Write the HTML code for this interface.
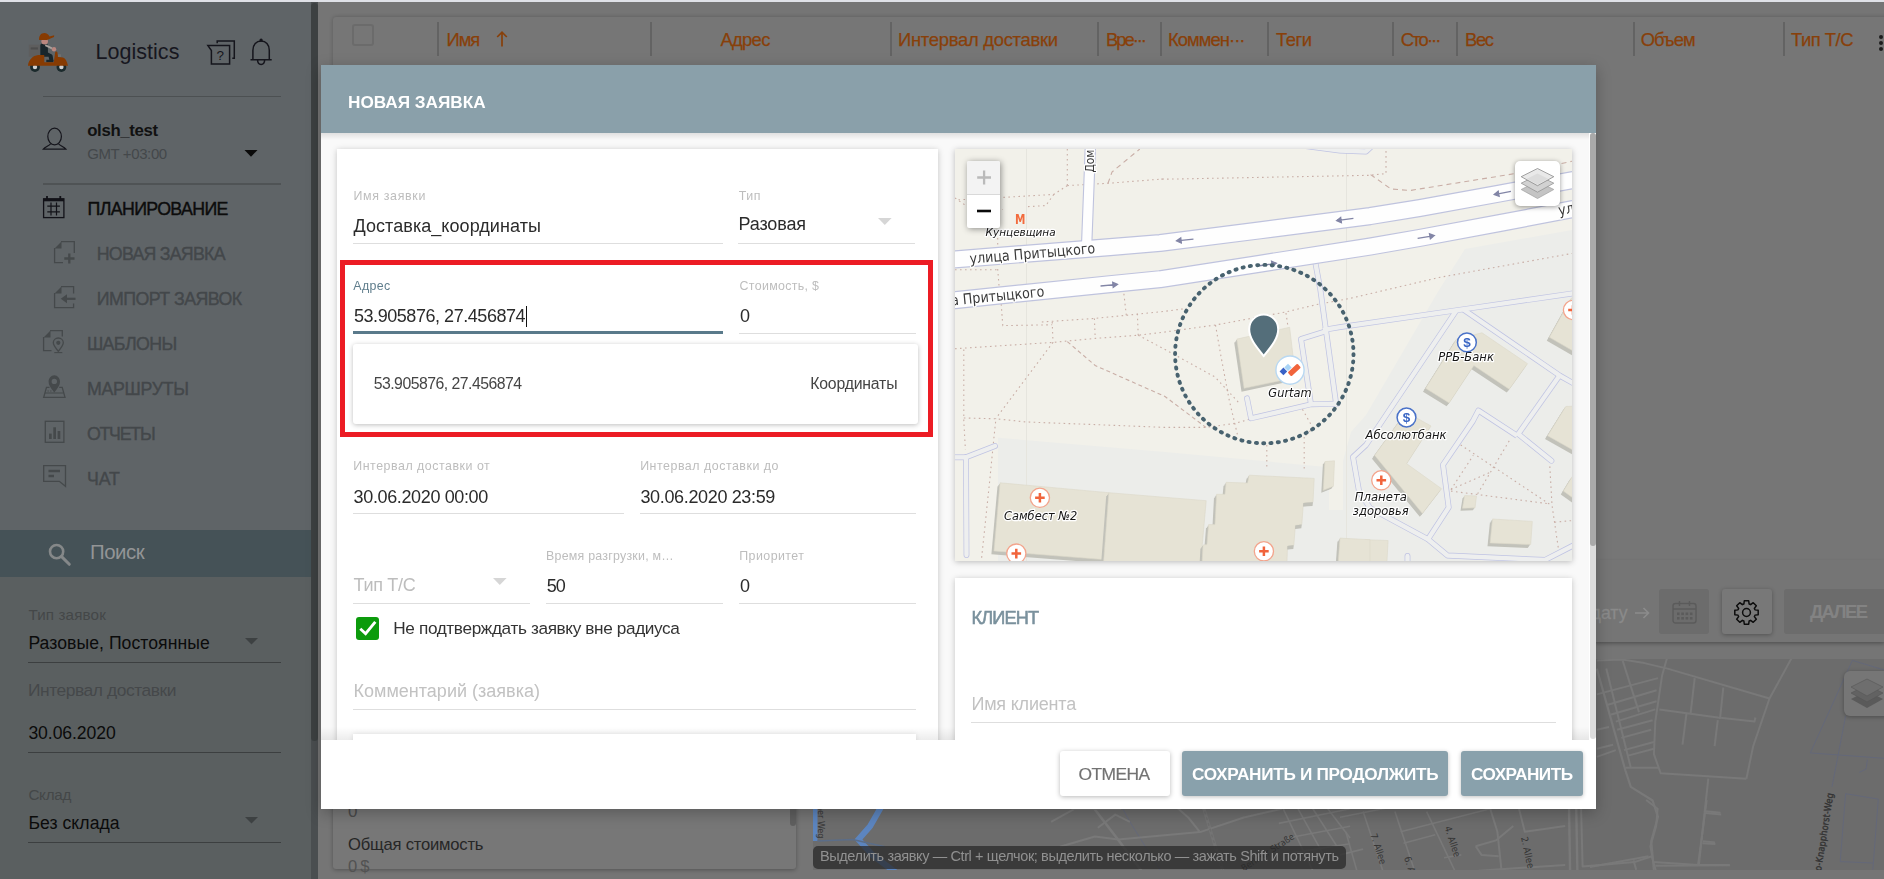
<!DOCTYPE html>
<html lang="ru"><head><meta charset="utf-8"><title>Logistics — Новая заявка</title>
<style>
html,body{margin:0;padding:0}
body{width:1884px;height:879px;overflow:hidden;position:relative;background:#757575;font-family:"Liberation Sans",sans-serif}
.t{position:absolute;white-space:nowrap;line-height:1}
.a{position:absolute}
svg{position:absolute;overflow:visible}
</style></head><body>
<div class="a" style="left:0;top:0;width:1884px;height:2px;background:#dfe1e7"></div>
<div class="a" style="left:333px;top:17px;width:1560px;height:625px;background:#767676;border-radius:3px;box-shadow:0 0 4px rgba(0,0,0,.22)"></div>
<div class="a" style="left:352px;top:24px;width:18px;height:18px;border:2px solid #6b6b6b;border-radius:3px"></div>
<div class="a" style="left:437.0px;top:22px;width:2px;height:34px;background:#636363"></div><div class="a" style="left:650.0px;top:22px;width:2px;height:34px;background:#636363"></div><div class="a" style="left:889.5px;top:22px;width:2px;height:34px;background:#636363"></div><div class="a" style="left:1097.0px;top:22px;width:2px;height:34px;background:#636363"></div><div class="a" style="left:1160.0px;top:22px;width:2px;height:34px;background:#636363"></div><div class="a" style="left:1267.0px;top:22px;width:2px;height:34px;background:#636363"></div><div class="a" style="left:1392.0px;top:22px;width:2px;height:34px;background:#636363"></div><div class="a" style="left:1456.0px;top:22px;width:2px;height:34px;background:#636363"></div><div class="a" style="left:1632.5px;top:22px;width:2px;height:34px;background:#636363"></div><div class="a" style="left:1782.5px;top:22px;width:2px;height:34px;background:#636363"></div>
<span class="t" style="top:31.00px;font-size:18.40px;color:#88400a;letter-spacing:-1.164px;left:446.60px;-webkit-text-stroke:.25px #88400a;">Имя</span><svg style="left:496px;top:30px" width="12" height="18" viewBox="0 0 12 18"><path d="M6 16.5V2.2M1.2 7L6 2.2L10.8 7" fill="none" stroke="#88400a" stroke-width="1.7"/></svg><span class="t" style="top:31.00px;font-size:18.40px;color:#88400a;letter-spacing:-0.664px;left:720.40px;-webkit-text-stroke:.25px #88400a;">Адрес</span><span class="t" style="top:31.00px;font-size:18.40px;color:#88400a;letter-spacing:-0.273px;left:898.00px;-webkit-text-stroke:.25px #88400a;">Интервал доставки</span><span class="t" style="top:31.00px;font-size:18.40px;color:#88400a;letter-spacing:-2.022px;left:1106.00px;-webkit-text-stroke:.25px #88400a;">Вре···</span><span class="t" style="top:31.00px;font-size:18.40px;color:#88400a;letter-spacing:-0.938px;left:1168.00px;-webkit-text-stroke:.25px #88400a;">Коммен···</span><span class="t" style="top:31.00px;font-size:18.40px;color:#88400a;letter-spacing:-0.474px;left:1276.00px;-webkit-text-stroke:.25px #88400a;">Теги</span><span class="t" style="top:31.00px;font-size:18.40px;color:#88400a;letter-spacing:-1.882px;left:1400.80px;-webkit-text-stroke:.25px #88400a;">Сто···</span><span class="t" style="top:31.00px;font-size:18.40px;color:#88400a;letter-spacing:-1.352px;left:1465.00px;-webkit-text-stroke:.25px #88400a;">Вес</span><span class="t" style="top:31.00px;font-size:18.40px;color:#88400a;letter-spacing:-0.898px;left:1640.70px;-webkit-text-stroke:.25px #88400a;">Объем</span><span class="t" style="top:31.00px;font-size:18.40px;color:#88400a;letter-spacing:-0.482px;left:1791.00px;-webkit-text-stroke:.25px #88400a;">Тип Т/С</span><div class="a" style="left:1879px;top:35px;width:4px;height:4px;border-radius:2px;background:#1d1d1d"></div><div class="a" style="left:1879px;top:41px;width:4px;height:4px;border-radius:2px;background:#1d1d1d"></div><div class="a" style="left:1879px;top:47px;width:4px;height:4px;border-radius:2px;background:#1d1d1d"></div>
<div class="a" style="left:1596px;top:560px;width:288px;height:82px;background:#757575;box-shadow:0 2px 4px rgba(0,0,0,.18)"></div>
<div class="a" style="left:813px;top:659px;width:1071px;height:211px;background:#6c6c6c;overflow:hidden"><svg style="left:0;top:0" width="1071" height="211" viewBox="813 659 1071 211"><path d="M813 809H817.500V841H813Z" fill="#5c85bf"/><polyline points="881.8,805.8 870.1,826.3 858.4,839.4 873.0,855.5 896.4,873.0" fill="none" stroke="#5c85bf" stroke-width="6"/><polyline points="817.5,840.9 852.6,839.4 884.7,846.7" fill="none" stroke="#5b6d88" stroke-width="1.500"/><polyline points="1596.8,660.4 1622.6,659.6 1644.4,663.1 1667.5,668.6 1769.5,698.5" fill="none" stroke="#797979" stroke-width="2" stroke-linejoin="round"/><polyline points="1667.5,656.3 1662.1,675.4 1655.3,721.6 1653.9,754.2 1660.7,773.3 1746.4,778.7" fill="none" stroke="#797979" stroke-width="2" stroke-linejoin="round"/><polyline points="1792.6,656.3 1769.5,698.5 1753.2,746.1 1746.4,778.7" fill="none" stroke="#797979" stroke-width="2" stroke-linejoin="round"/><polyline points="1659.4,709.4 1717.8,717.5 1754.5,721.6 1755.4,717.5" fill="none" stroke="#797979" stroke-width="2" stroke-linejoin="round"/><polyline points="1694.7,678.1 1690.6,713.4" fill="none" stroke="#797979" stroke-width="2" stroke-linejoin="round"/><polyline points="1686.5,713.4 1682.5,744.7" fill="none" stroke="#797979" stroke-width="2" stroke-linejoin="round"/><polyline points="1723.3,687.6 1720.0,718.9" fill="none" stroke="#797979" stroke-width="2" stroke-linejoin="round"/><polyline points="1717.8,720.2 1714.6,746.1" fill="none" stroke="#797979" stroke-width="2" stroke-linejoin="round"/><polyline points="1596.8,694.4 1658.0,678.1" fill="none" stroke="#797979" stroke-width="2" stroke-linejoin="round"/><polyline points="1606.3,705.3 1656.6,690.3" fill="none" stroke="#797979" stroke-width="2" stroke-linejoin="round"/><polyline points="1610.4,714.8 1656.6,701.2" fill="none" stroke="#797979" stroke-width="2" stroke-linejoin="round"/><polyline points="1615.8,721.6 1655.3,709.4" fill="none" stroke="#797979" stroke-width="2" stroke-linejoin="round"/><polyline points="1617.2,729.7 1652.6,720.2" fill="none" stroke="#797979" stroke-width="2" stroke-linejoin="round"/><polyline points="1621.3,737.9 1651.2,729.7" fill="none" stroke="#797979" stroke-width="2" stroke-linejoin="round"/><polyline points="1624.0,750.1 1653.9,742.0" fill="none" stroke="#797979" stroke-width="2" stroke-linejoin="round"/><polyline points="1628.1,755.6 1653.9,748.8" fill="none" stroke="#797979" stroke-width="2" stroke-linejoin="round"/><polyline points="1625.4,767.8 1658.0,767.8" fill="none" stroke="#797979" stroke-width="2" stroke-linejoin="round"/><polyline points="1596.8,729.7 1609.0,727.0" fill="none" stroke="#797979" stroke-width="2" stroke-linejoin="round"/><polyline points="1596.8,748.8 1613.1,744.7" fill="none" stroke="#797979" stroke-width="2" stroke-linejoin="round"/><polyline points="1596.8,756.9 1615.8,750.1" fill="none" stroke="#797979" stroke-width="2" stroke-linejoin="round"/><polyline points="1596.8,668.6 1625.4,770.5 1630.8,786.9 1652.6,800.5 1658.0,816.8 1651.2,841.3 1653.9,869.8" fill="none" stroke="#797979" stroke-width="2.2" stroke-linejoin="round"/><polyline points="1606.3,668.6 1630.8,767.8" fill="none" stroke="#797979" stroke-width="2" stroke-linejoin="round"/><polyline points="1622.6,660.4 1639.0,712.1" fill="none" stroke="#797979" stroke-width="2" stroke-linejoin="round"/><polyline points="1590.0,867.1 1648.5,856.2" fill="none" stroke="#797979" stroke-width="2" stroke-linejoin="round"/><polyline points="1633.5,860.3 1636.2,869.8" fill="none" stroke="#797979" stroke-width="2" stroke-linejoin="round"/><polyline points="1655.3,865.7 1730.1,865.2" fill="none" stroke="#797979" stroke-width="2" stroke-linejoin="round"/><polyline points="1708.3,778.7 1698.8,865.7" fill="none" stroke="#797979" stroke-width="2" stroke-linejoin="round"/><polyline points="1705.6,811.3 1720.5,812.7" fill="none" stroke="#797979" stroke-width="2" stroke-linejoin="round"/><polyline points="1702.9,841.3 1715.1,842.6" fill="none" stroke="#797979" stroke-width="2" stroke-linejoin="round"/><polyline points="1852.4,660.4 1810.3,752.9 1884.0,758.3" fill="none" stroke="#646879" stroke-width="1" stroke-linejoin="round"/><polyline points="1852.4,660.4 1884.0,669.9" fill="none" stroke="#646879" stroke-width="1" stroke-linejoin="round"/><polyline points="1845.6,716.1 1832.0,786.9" fill="none" stroke="#646879" stroke-width="1" stroke-linejoin="round"/><polyline points="1845.6,793.7 1878.3,799.1 1872.8,869.8" fill="none" stroke="#646879" stroke-width="1" stroke-linejoin="round"/><polyline points="1845.6,793.7 1840.2,861.6 1872.8,863.0" fill="none" stroke="#646879" stroke-width="1" stroke-linejoin="round"/><polyline points="1867.4,759.7 1866.0,769.2 1859.2,772.4" fill="none" stroke="#646879" stroke-width="1" stroke-linejoin="round"/><polyline points="1051.1,821.9 1074.5,808.8" fill="none" stroke="#797979" stroke-width="2" stroke-linejoin="round"/><polyline points="1092.0,805.8 1116.8,838.0 1143.1,873.0" fill="none" stroke="#797979" stroke-width="2.6" stroke-linejoin="round"/><polyline points="1121.2,805.8 1129.9,821.9 1162.0,873.0" fill="none" stroke="#646879" stroke-width="1" stroke-linejoin="round"/><polyline points="1059.9,846.7 1094.9,836.5 1118.2,839.4 1200.0,832.1 1188.3,817.5 1176.6,807.3" fill="none" stroke="#797979" stroke-width="2" stroke-linejoin="round"/><polyline points="1074.5,808.8 1121.2,808.8" fill="none" stroke="#797979" stroke-width="2" stroke-linejoin="round"/><polyline points="1097.8,827.7 1115.3,814.6 1129.9,821.9" fill="none" stroke="#797979" stroke-width="2" stroke-linejoin="round"/><polyline points="1202.9,805.8 1223.4,873.0" fill="none" stroke="#747474" stroke-width="3.2" stroke-linejoin="round"/><polyline points="1200.0,832.1 1243.8,817.5 1281.8,808.8" fill="none" stroke="#797979" stroke-width="2" stroke-linejoin="round"/><polyline points="1281.8,805.8 1313.9,873.0" fill="none" stroke="#797979" stroke-width="1.6" stroke-linejoin="round"/><polyline points="1296.4,805.8 1325.5,858.4" fill="none" stroke="#797979" stroke-width="1.6" stroke-linejoin="round"/><polyline points="1310.9,805.8 1337.2,846.7" fill="none" stroke="#797979" stroke-width="1.6" stroke-linejoin="round"/><polyline points="1325.5,805.8 1350.1,838.0" fill="none" stroke="#797979" stroke-width="1.6" stroke-linejoin="round"/><polyline points="1278.8,823.4 1350.1,808.8" fill="none" stroke="#797979" stroke-width="1.6" stroke-linejoin="round"/><polyline points="1287.6,838.0 1350.1,826.3" fill="none" stroke="#797979" stroke-width="1.6" stroke-linejoin="round"/><polyline points="1293.4,852.6 1350.1,843.8" fill="none" stroke="#797979" stroke-width="1.6" stroke-linejoin="round"/><polyline points="1340.0,817.3 1397.8,805.8" fill="none" stroke="#797979" stroke-width="1.6" stroke-linejoin="round"/><polyline points="1345.8,831.8 1357.3,872.2" fill="none" stroke="#797979" stroke-width="1.6" stroke-linejoin="round"/><polyline points="1363.1,811.6 1383.3,872.2" fill="none" stroke="#797979" stroke-width="1.6" stroke-linejoin="round"/><polyline points="1394.9,811.6 1415.1,872.2" fill="none" stroke="#797979" stroke-width="1.6" stroke-linejoin="round"/><polyline points="1426.6,811.6 1455.5,872.2" fill="none" stroke="#797979" stroke-width="1.6" stroke-linejoin="round"/><polyline points="1400.6,831.8 1490.2,808.7" fill="none" stroke="#797979" stroke-width="1.6" stroke-linejoin="round"/><polyline points="1403.5,843.3 1435.3,834.7" fill="none" stroke="#797979" stroke-width="1.6" stroke-linejoin="round"/><polyline points="1340.0,854.9 1363.1,849.1" fill="none" stroke="#797979" stroke-width="1.6" stroke-linejoin="round"/><polyline points="1444.0,857.8 1461.3,854.9" fill="none" stroke="#797979" stroke-width="1.6" stroke-linejoin="round"/><polyline points="1490.2,808.7 1497.4,831.8 1501.7,872.2" fill="none" stroke="#797979" stroke-width="2" stroke-linejoin="round"/><polyline points="1519.0,808.7 1524.8,831.8 1565.2,826.0" fill="none" stroke="#797979" stroke-width="2" stroke-linejoin="round"/><polyline points="1475.7,846.2 1495.9,840.4 1513.3,826.0" fill="none" stroke="#797979" stroke-width="2" stroke-linejoin="round"/><polyline points="1475.7,846.2 1481.5,854.9 1498.8,856.3" fill="none" stroke="#797979" stroke-width="2" stroke-linejoin="round"/><polyline points="1478.6,870.7 1565.2,865.0" fill="none" stroke="#797979" stroke-width="2" stroke-linejoin="round"/><polyline points="1569.0,805.8 1570.1,872.2" fill="none" stroke="#797979" stroke-width="2.4" stroke-linejoin="round"/><polyline points="1576.2,805.8 1577.4,872.2" fill="none" stroke="#797979" stroke-width="2.4" stroke-linejoin="round"/><polyline points="1581.1,808.7 1582.6,866.4 1634.5,862.1 1651.9,856.3 1656.2,872.2" fill="none" stroke="#797979" stroke-width="2" stroke-linejoin="round"/><polyline points="1646.1,800.0 1657.6,808.7 1656.2,826.0 1650.4,846.2 1653.3,862.1 1698.1,865.0 1729.8,865.0" fill="none" stroke="#797979" stroke-width="2" stroke-linejoin="round"/><polyline points="1706.7,800.0 1698.1,865.0" fill="none" stroke="#797979" stroke-width="2" stroke-linejoin="round"/><polyline points="1705.3,813.0 1721.2,814.4" fill="none" stroke="#797979" stroke-width="2" stroke-linejoin="round"/><polyline points="1702.4,843.3 1715.4,843.9" fill="none" stroke="#797979" stroke-width="2" stroke-linejoin="round"/><polyline points="1202.9,805.8 1223.4,873.0" fill="none" stroke="#6c6c6c" stroke-width="1.400" stroke-dasharray="3 3"/><text x="1820.9" y="873.8" font-family="'DejaVu Sans Condensed', sans-serif" font-size="9.5" fill="#353535" transform="rotate(-81 1820.9 873.8)">lo-Knapphorst-Weg</text><text x="1820.4" y="873.7" font-family="'DejaVu Sans Condensed', sans-serif" font-size="9.5" fill="#353535" transform="rotate(-81 1820.4 873.7)">lo-Knapphorst-Weg</text><text x="1370.3" y="834.7" font-family="'DejaVu Sans Condensed', sans-serif" font-size="9.5" fill="#353535" transform="rotate(72 1370.3 834.7)">7. Allee</text><text x="1404.1" y="857.8" font-family="'DejaVu Sans Condensed', sans-serif" font-size="9.5" fill="#353535" transform="rotate(72 1404.1 857.8)">6. Allee</text><text x="1444.5" y="827.4" font-family="'DejaVu Sans Condensed', sans-serif" font-size="9.5" fill="#353535" transform="rotate(72 1444.5 827.4)">4. Allee</text><text x="1521.1" y="837.5" font-family="'DejaVu Sans Condensed', sans-serif" font-size="9.5" fill="#353535" transform="rotate(78 1521.1 837.5)">2. Allee</text><text x="817.500" y="838.500" font-family="'DejaVu Sans Condensed', sans-serif" font-size="9" fill="#353535" text-anchor="end" transform="rotate(90 817.500 838.500)">Berliner Weg</text><text x="1243.8" y="871.5" font-family="'DejaVu Sans Condensed', sans-serif" font-size="9" fill="#353535" transform="rotate(-33 1243.8 871.5)">Berliner Straße</text></svg></div><span class="t" style="top:605.00px;font-size:17.80px;color:#8a8a8a;right:256.40px;-webkit-text-stroke:.3px #8a8a8a;">дату</span><svg style="left:1634px;top:606px" width="16" height="14" viewBox="0 0 16 14"><path d="M1 7H14.5M9.5 2L14.5 7L9.5 12" fill="none" stroke="#8c8c8c" stroke-width="1.6"/></svg><div class="a" style="left:1659px;top:589px;width:50px;height:45px;background:#6c6c6c;border-radius:3px"></div><svg style="left:1672px;top:600px" width="25" height="24" viewBox="0 0 25 24"><g fill="none" stroke="#5b5b5b" stroke-width="1.4"><rect x="1" y="3.5" width="23" height="19.5" rx="2.5"/><path d="M1 9H24M7.5 1V6M17.5 1V6"/></g><g fill="#5b5b5b"><rect x="5" y="12.5" width="2.6" height="2.6"/><rect x="9.3" y="12.5" width="2.6" height="2.6"/><rect x="13.6" y="12.5" width="2.6" height="2.6"/><rect x="17.9" y="12.5" width="2.6" height="2.6"/><rect x="5" y="17" width="2.6" height="2.6"/><rect x="9.3" y="17" width="2.6" height="2.6"/><rect x="13.6" y="17" width="2.6" height="2.6"/><rect x="17.9" y="17" width="2.6" height="2.6"/></g></svg><div class="a" style="left:1722px;top:589px;width:50px;height:45px;background:#787878;border-radius:3px;box-shadow:0 1px 4px rgba(0,0,0,.3)"></div><svg style="left:1733px;top:599.300px" width="27" height="27" viewBox="0 0 27 27"><g fill="none" stroke="#0d0d0d" stroke-width="1.500" stroke-linejoin="round"><path d="M10.87 5.00L11.31 1.80L15.69 1.80L16.13 5.00A8.90 8.90 0 0 1 17.65 5.63L17.65 5.63L20.22 3.68L23.32 6.78L21.37 9.35A8.90 8.90 0 0 1 22.00 10.87L22.00 10.87L25.20 11.31L25.20 15.69L22.00 16.13A8.90 8.90 0 0 1 21.37 17.65L21.37 17.65L23.32 20.22L20.22 23.32L17.65 21.37A8.90 8.90 0 0 1 16.13 22.00L16.13 22.00L15.69 25.20L11.31 25.20L10.87 22.00A8.90 8.90 0 0 1 9.35 21.37L9.35 21.37L6.78 23.32L3.68 20.22L5.63 17.65A8.90 8.90 0 0 1 5.00 16.13L5.00 16.13L1.80 15.69L1.80 11.31L5.00 10.87A8.90 8.90 0 0 1 5.63 9.35L5.63 9.35L3.68 6.78L6.78 3.68L9.35 5.63A8.90 8.90 0 0 1 10.87 5.00Z"/><circle cx="13.500" cy="13.500" r="3.900"/></g></svg><div class="a" style="left:1784px;top:589px;width:110px;height:45px;background:#6c6c6c;border-radius:3px"></div><span class="t" style="top:603.00px;font-size:18.50px;color:#838383;font-weight:700;letter-spacing:-1.609px;left:1810.00px;">ДАЛЕЕ</span><div class="a" style="left:1844px;top:671px;width:50px;height:45px;background:#767676;border-radius:6px;box-shadow:0 1px 4px rgba(0,0,0,.3)"></div><svg style="left:1849px;top:677px" width="36" height="34" viewBox="0 0 36 34"><path d="M18 14L34 22L18 31L2 22Z" fill="#5a5a5a"/><path d="M18 8L34 16L18 25L2 16Z" fill="#626262" stroke="#555" stroke-width=".6"/><path d="M18 2L34 10L18 19L2 10Z" fill="#6e6e6e" stroke="#585858" stroke-width=".6"/></svg>
<div class="a" style="left:333px;top:800px;width:463px;height:69px;background:#777;border-radius:0 0 3px 3px;box-shadow:0 1px 4px rgba(0,0,0,.3)"></div><div class="a" style="left:790px;top:800px;width:6px;height:26px;background:#5f5f5f;border-radius:3px"></div><span class="t" style="top:803.00px;font-size:17.00px;color:#4a4a4a;left:348.00px;">0</span><span class="t" style="top:837.00px;font-size:16.60px;color:#262626;letter-spacing:-0.199px;left:348.00px;">Общая стоимость</span><span class="t" style="top:859.00px;font-size:16.60px;color:#525252;letter-spacing:-0.789px;left:348.00px;">0 $</span><div class="a" style="left:813px;top:846px;width:533px;height:23px;background:rgba(40,40,40,.74);border-radius:5px"></div><span class="t" style="top:849.00px;font-size:14.50px;color:#909090;letter-spacing:-0.393px;left:820.00px;z-index:1;">Выделить заявку — Ctrl + щелчок; выделить несколько — зажать Shift и потянуть</span>
<div class="a" style="left:0;top:2px;width:311px;height:528px;background:#5f6467"></div><div class="a" style="left:0;top:577px;width:311px;height:302px;background:#5a5f60"></div><div class="a" style="left:0;top:530px;width:311px;height:47px;background:#455257"></div><div class="a" style="left:311px;top:2px;width:7px;height:877px;background:#4a4e50"></div><div class="a" style="left:311px;top:3px;width:7px;height:738px;background:#3d4142;border-radius:3.5px"></div>
<svg style="left:27px;top:32px" width="42" height="40" viewBox="0 0 42 40">
<circle cx="8" cy="35" r="4.900" fill="#1b2a2c"/><circle cx="8" cy="35" r="2.200" fill="#cfcfcf"/>
<circle cx="34.400" cy="35" r="4.900" fill="#1b2a2c"/><circle cx="34.400" cy="35" r="2.200" fill="#cfcfcf"/>
<rect x="1.900" y="12.700" width="10.900" height="11.900" fill="#5e5e5e"/><rect x="3.700" y="15.400" width="7.200" height="2.100" fill="#4d4d4d"/>
<path d="M13.300 13.500C13.300 12.400 14 11.800 15 11.800H19C20.300 11.800 20.900 12.600 20.900 13.800V20.500L24.300 22.200C25.200 22.600 25.600 23.300 25.700 24.200L26.300 27.800C26.900 28.300 26.700 30.200 25.800 30.200H19.300V27.800H22.300L21.600 24.800H13.300Z" fill="#18252b"/>
<path d="M0.960 33.800C1.200 30.500 2.300 28 5.700 25C8 23.500 10.500 23 13.300 23H16.900C17.300 23 17.300 23.300 17.300 23.600V30.200H26.800L28 21.400C28.200 20 28.500 19.500 29.200 19.500C30 19.500 30.300 19.700 30.400 20.500L31.200 25C33 25.200 34.600 25.200 36 25.400C38.500 26.500 40 29 41 33.800Z" fill="#873b02"/>
<path d="M18.600 12.300L25.300 15.600L24.600 17.200L17.900 13.900Z" fill="#a9a29e"/>
<circle cx="27" cy="17.200" r="2.200" fill="#b9867f"/>
<rect x="30.900" y="22.300" width="3.100" height="2.700" fill="#707070"/>
<circle cx="17.700" cy="9.300" r="3.300" fill="#b9867f"/>
<path d="M12.100 7.900C11.800 4 14 1.100 17.300 1.100C19.600 1.100 21.500 2.600 22.500 4.600L27.200 3.300L27 5.100L20 7.900Z" fill="#873b02"/>
</svg><span class="t" style="top:42.00px;font-size:21.50px;color:#17171f;letter-spacing:0.043px;left:95.40px;">Logistics</span><svg style="left:207px;top:39px" width="30" height="27" viewBox="0 0 30 27"><g fill="none" stroke="#15151c" stroke-width="1.500"><path d="M10.200 4.300V2.100H27.300V19.200H25.300"/><path d="M0.900 6.600H22.600V25H4.400V11.500Z"/></g></svg><span class="t" style="top:49.00px;font-size:13.50px;color:#15151c;left:216.60px;">?</span><svg style="left:249px;top:38px" width="24" height="28" viewBox="0 0 24 28"><g fill="none" stroke="#15151c" stroke-width="1.500"><path d="M1.500 21.700H22.700M3.900 21.700V12.300C3.900 6.500 7.400 3 12.100 3C16.800 3 20.300 6.500 20.300 12.300V21.700"/><path d="M8.600 22C8.600 24.600 10.100 26.400 12.100 26.400C14.100 26.400 15.600 24.600 15.600 22"/><circle cx="12.100" cy="2.200" r="0.900"/></g></svg><svg style="left:42px;top:127px" width="26" height="24" viewBox="0 0 26 24"><g fill="none" stroke="#15151c" stroke-width="1.200"><ellipse cx="12.600" cy="9.500" rx="6.800" ry="8.300"/><path d="M8.800 16.600C7 19 3.500 19.500 1.300 22.200H23.900C21.700 19.500 18.200 19 16.400 16.600"/></g></svg><svg style="left:42px;top:195px" width="24" height="24" viewBox="0 0 24 24"><g fill="none" stroke="#121218" stroke-width="1.300"><rect x="1.600" y="3.800" width="20.300" height="18.800"/><path d="M5 1V4M18.300 1V4" stroke-width="1.800"/><path d="M1.600 5H22" stroke-width="2.600"/><path d="M9 7.600V20.600M14.500 7.600V20.600M5.300 11.200H17.900M5.300 16.800H17.900" stroke-width="1.200"/></g></svg><svg style="left:53px;top:239.500px" width="24" height="25" viewBox="0 0 24 25"><path d="M1.600 8.500L8.500 1.600V8.500Z" fill="#45494b"/><g fill="none" stroke="#45494b" stroke-width="1.300"><path d="M8 1.600H21.300V13M1.600 8V22.600H10"/><path d="M16.300 13.500V23.500M11.300 18.500H21.500" stroke-width="2.300"/></g></svg><svg style="left:53px;top:284.500px" width="24" height="25" viewBox="0 0 24 25"><path d="M1.600 8.500L8.500 1.600V8.500Z" fill="#45494b"/><g fill="none" stroke="#45494b" stroke-width="1.300"><path d="M8 1.600H20.600V8.500M1.600 8V22.600H20.600V18.500"/><path d="M10 13.800H22.500" stroke-width="2.200"/></g><path d="M7.800 13.800L14 9.300V18.300Z" fill="#45494b"/></svg><svg style="left:42px;top:328.800px" width="24" height="25" viewBox="0 0 24 25"><path d="M1.600 8.500L8.500 1.600V8.500Z" fill="#45494b"/><g fill="none" stroke="#45494b" stroke-width="1.300"><path d="M8 1.600H20.300V7.500M1.600 8V21.600H9.500"/><path d="M16.300 22.300C13 18.300 11.300 16.300 11.300 13.800C11.300 11 13.500 9 16.300 9C19.100 9 21.300 11 21.300 13.800C21.300 16.300 19.600 18.300 16.300 22.300Z"/><path d="M12.300 23.600H20.300" stroke-width="1.100"/></g><circle cx="16.300" cy="13.800" r="2.100" fill="#45494b"/></svg><svg style="left:42px;top:374px" width="25" height="25" viewBox="0 0 25 25"><g fill="none" stroke="#45494b" stroke-width="1.300"><path d="M7.500 13.300H4.500L1.700 23.300H23L20.200 13.300H17.200"/><path d="M3 19H21.700" stroke-width="1"/></g><path d="M12.300 18.500C8.500 13.800 6.600 11.200 6.600 7.800C6.600 4.300 9 1.300 12.300 1.300C15.600 1.300 18 4.300 18 7.800C18 11.200 16.100 13.800 12.300 18.500ZM12.300 4.700A2.700 2.700 0 1 0 12.300 10.100A2.700 2.700 0 1 0 12.300 4.700Z" fill="#45494b" fill-rule="evenodd"/><path d="M5.500 17H6.800M8.200 17H9.500" stroke="#45494b" stroke-width="1"/></svg><svg style="left:44px;top:420px" width="22" height="24" viewBox="0 0 22 24"><rect x="1.300" y="1.300" width="18.600" height="21" fill="none" stroke="#45494b" stroke-width="1.300"/><g fill="#45494b"><rect x="5" y="13.600" width="2.700" height="5.400"/><rect x="9.300" y="7.300" width="2.700" height="11.700"/><rect x="13.600" y="11" width="2.700" height="8"/></g></svg><svg style="left:42px;top:463.800px" width="26" height="25" viewBox="0 0 26 25"><g fill="none" stroke="#45494b"><path d="M1.700 1.600H23.500V22.300L17.300 17.300H1.700Z" stroke-width="1.300"/><path d="M6.500 7H18M6.500 12H12" stroke-width="2.300"/></g></svg><div class="a" style="left:43px;top:96px;width:238px;height:1px;background:#4c5052"></div><div class="a" style="left:43px;top:183px;width:238px;height:2px;background:#4f5355"></div><span class="t" style="top:123.00px;font-size:16.80px;color:#111;font-weight:700;letter-spacing:-0.336px;left:87.20px;">olsh_test</span><span class="t" style="top:146.00px;font-size:15.00px;color:#44484b;letter-spacing:-0.392px;left:87.20px;">GMT +03:00</span><svg style="left:244px;top:150px" width="14" height="7" viewBox="0 0 14 7"><path d="M0.5 0H13.5L7 6.8Z" fill="#0a0a0a"/></svg><span class="t" style="top:201.00px;font-size:17.80px;color:#0c0c0c;letter-spacing:-0.640px;left:87.60px;-webkit-text-stroke:.4px #0c0c0c;">ПЛАНИРОВАНИЕ</span><span class="t" style="top:246.00px;font-size:17.80px;color:#43474a;letter-spacing:-0.764px;left:96.80px;-webkit-text-stroke:.4px #43474a;">НОВАЯ ЗАЯВКА</span><span class="t" style="top:291.00px;font-size:17.80px;color:#43474a;letter-spacing:-0.547px;left:96.80px;-webkit-text-stroke:.4px #43474a;">ИМПОРТ ЗАЯВОК</span><span class="t" style="top:336.00px;font-size:17.80px;color:#43474a;letter-spacing:-0.604px;left:86.90px;-webkit-text-stroke:.4px #43474a;">ШАБЛОНЫ</span><span class="t" style="top:381.00px;font-size:17.80px;color:#43474a;letter-spacing:-0.286px;left:86.90px;-webkit-text-stroke:.4px #43474a;">МАРШРУТЫ</span><span class="t" style="top:426.00px;font-size:17.80px;color:#43474a;letter-spacing:-1.243px;left:86.90px;-webkit-text-stroke:.4px #43474a;">ОТЧЕТЫ</span><span class="t" style="top:471.00px;font-size:17.80px;color:#43474a;letter-spacing:-0.094px;left:86.90px;-webkit-text-stroke:.4px #43474a;">ЧАТ</span><svg style="left:48px;top:543px" width="23" height="23" viewBox="0 0 23 23"><circle cx="8.6" cy="8.6" r="6.6" fill="none" stroke="#858889" stroke-width="2.6"/><path d="M13.6 13.6L21.3 21.3" stroke="#858889" stroke-width="3" stroke-linecap="round"/></svg><span class="t" style="top:542.00px;font-size:20.40px;color:#939596;letter-spacing:-0.479px;left:90.00px;">Поиск</span><span class="t" style="top:607.00px;font-size:15.20px;color:#444748;letter-spacing:0.136px;left:28.40px;">Тип заявок</span><span class="t" style="top:635.00px;font-size:17.60px;color:#0b0b0b;letter-spacing:0.060px;left:28.40px;">Разовые, Постоянные</span><svg style="left:244.5px;top:638px" width="13" height="7" viewBox="0 0 13 7"><path d="M0 0H13L6.5 6.6Z" fill="#3d4142"/></svg><div class="a" style="left:28px;top:662px;width:253px;height:1px;background:#3c3f40"></div><span class="t" style="top:682.00px;font-size:17.40px;color:#45484a;letter-spacing:-0.440px;left:28.00px;">Интервал доставки</span><span class="t" style="top:725.00px;font-size:17.60px;color:#0b0b0b;letter-spacing:-0.074px;left:28.40px;">30.06.2020</span><div class="a" style="left:28px;top:752px;width:253px;height:1px;background:#3c3f40"></div><span class="t" style="top:787.00px;font-size:15.20px;color:#444748;letter-spacing:-0.242px;left:28.40px;">Склад</span><span class="t" style="top:815.00px;font-size:17.60px;color:#0b0b0b;letter-spacing:0.055px;left:28.40px;">Без склада</span><svg style="left:244.8px;top:817.4px" width="13" height="7" viewBox="0 0 13 7"><path d="M0 0H13L6.5 6.6Z" fill="#3d4142"/></svg><div class="a" style="left:28px;top:842px;width:253px;height:1px;background:#3c3f40"></div>
<div class="a" style="left:0;top:0;width:1884px;height:879px;will-change:transform"><div class="a" style="left:321px;top:65px;width:1275px;height:744px;background:#fff;box-shadow:0 4px 14px rgba(0,0,0,.25)"></div><div class="a" style="left:321px;top:65px;width:1275px;height:68px;background:#8aa0aa"></div><span class="t" style="top:94.00px;font-size:17.20px;color:#fff;font-weight:700;letter-spacing:-0.012px;left:348.00px;">НОВАЯ ЗАЯВКА</span><div class="a" style="left:321px;top:133px;width:1275px;height:607px;background:#f9f9f9"></div>
<div class="a" style="left:321px;top:133px;width:1268px;height:7px;background:linear-gradient(rgba(0,0,0,.10),rgba(0,0,0,0))"></div><div class="a" style="left:337px;top:149px;width:601px;height:640px;background:#fff;box-shadow:0 1px 6px rgba(0,0,0,.22)"></div><span class="t" style="top:190.00px;font-size:12.40px;color:#bdbdbd;letter-spacing:0.689px;left:353.40px;">Имя заявки</span><span class="t" style="top:217.00px;font-size:18.00px;color:#2b2b2b;letter-spacing:0.060px;left:353.50px;">Доставка_координаты</span><div class="a" style="left:353px;top:243px;width:370px;height:1px;background:#dedede"></div><span class="t" style="top:190.00px;font-size:12.40px;color:#bdbdbd;letter-spacing:0.522px;left:738.80px;">Тип</span><span class="t" style="top:215.00px;font-size:18.00px;color:#2b2b2b;letter-spacing:-0.134px;left:738.50px;">Разовая</span><svg style="left:878px;top:218px" width="14" height="7" viewBox="0 0 14 7"><path d="M0 0H13.600L6.800 6.900Z" fill="#d6d6d6"/></svg><div class="a" style="left:738px;top:243px;width:177px;height:1px;background:#dedede"></div><span class="t" style="top:280.00px;font-size:12.40px;color:#5f7d8c;letter-spacing:0.354px;left:353.30px;">Адрес</span><span class="t" style="top:307.00px;font-size:18.00px;color:#2b2b2b;letter-spacing:-0.452px;left:354.00px;">53.905876, 27.456874</span><div class="a" style="left:526px;top:306px;width:1px;height:21px;background:#111"></div><div class="a" style="left:353px;top:331px;width:370px;height:3px;background:#5a7a8b"></div><span class="t" style="top:280.00px;font-size:12.40px;color:#bdbdbd;letter-spacing:0.335px;left:739.50px;">Стоимость, $</span><span class="t" style="top:307.00px;font-size:18.00px;color:#2b2b2b;left:740.00px;">0</span><div class="a" style="left:739px;top:333px;width:177px;height:1px;background:#dedede"></div><div class="a" style="left:353px;top:344px;width:565px;height:80px;background:#fff;border-radius:3px;box-shadow:0 1px 5px rgba(0,0,0,.26)"></div><span class="t" style="top:376.00px;font-size:15.80px;color:#454545;letter-spacing:-0.512px;left:373.70px;">53.905876, 27.456874</span><span class="t" style="top:376.00px;font-size:15.80px;color:#454545;letter-spacing:-0.189px;right:986.69px;">Координаты</span><div class="a" style="left:340px;top:260px;width:583px;height:167px;border:5px solid #ec1c24"></div><span class="t" style="top:460.00px;font-size:12.40px;color:#bdbdbd;letter-spacing:0.527px;left:353.30px;">Интервал доставки от</span><span class="t" style="top:488.00px;font-size:18.00px;color:#2b2b2b;letter-spacing:-0.363px;left:353.60px;">30.06.2020 00:00</span><div class="a" style="left:353px;top:513px;width:271px;height:1px;background:#dedede"></div><span class="t" style="top:460.00px;font-size:12.40px;color:#bdbdbd;letter-spacing:0.526px;left:640.20px;">Интервал доставки до</span><span class="t" style="top:488.00px;font-size:18.00px;color:#2b2b2b;letter-spacing:-0.343px;left:640.40px;">30.06.2020 23:59</span><div class="a" style="left:640px;top:513px;width:276px;height:1px;background:#dedede"></div><span class="t" style="top:576.00px;font-size:18.00px;color:#bdbdbd;letter-spacing:-0.303px;left:353.50px;">Тип Т/С</span><svg style="left:493px;top:578px" width="14" height="7" viewBox="0 0 14 7"><path d="M0 0H13.600L6.800 6.900Z" fill="#d6d6d6"/></svg><div class="a" style="left:353px;top:603px;width:177px;height:1px;background:#dedede"></div><span class="t" style="top:550.00px;font-size:12.40px;color:#bdbdbd;letter-spacing:0.243px;left:546.00px;">Время разгрузки, м…</span><span class="t" style="top:577.00px;font-size:18.00px;color:#2b2b2b;letter-spacing:-1.031px;left:546.70px;">50</span><div class="a" style="left:546px;top:603px;width:177px;height:1px;background:#dedede"></div><span class="t" style="top:550.00px;font-size:12.40px;color:#bdbdbd;letter-spacing:0.459px;left:739.20px;">Приоритет</span><span class="t" style="top:577.00px;font-size:18.00px;color:#2b2b2b;left:740.00px;">0</span><div class="a" style="left:739px;top:603px;width:177px;height:1px;background:#dedede"></div><div class="a" style="left:356.200px;top:617.200px;width:23px;height:23px;background:#0c9b0c;border-radius:3px"></div><svg style="left:356.200px;top:617.200px" width="23" height="23" viewBox="0 0 23 23"><path d="M4.300 11.700L9.600 16.700L19.300 4.900" fill="none" stroke="#fff" stroke-width="2.900"/></svg><span class="t" style="top:620.00px;font-size:17.20px;color:#333;letter-spacing:-0.367px;left:393.30px;">Не подтверждать заявку вне радиуса</span><span class="t" style="top:682.00px;font-size:18.00px;color:#c2c2c2;letter-spacing:0.015px;left:353.50px;">Комментарий (заявка)</span><div class="a" style="left:353px;top:709px;width:563px;height:1px;background:#dedede"></div><div class="a" style="left:321px;top:727px;width:1268px;height:13px;background:linear-gradient(rgba(0,0,0,0),rgba(0,0,0,.075))"></div><div class="a" style="left:353px;top:734px;width:563px;height:40px;background:#fff;box-shadow:0 0 5px rgba(0,0,0,.10)"></div>
<div class="a" style="left:955px;top:149px;width:617px;height:412px;background:#f2f1ea;box-shadow:0 1px 6px rgba(0,0,0,.25);overflow:hidden"><svg style="left:0;top:0" width="617" height="412" viewBox="955 149 617 412"><polygon points="1580.0,228.5 1465.0,249.0 1439.0,290.0 1366.0,415.0 1351.0,432.0 1343.0,461.0 1343.0,570.0 1580.0,570.0" fill="#ecedea" /><polygon points="998.0,437.7 1165.0,452.0 1321.0,466.4 1329.0,467.0 1329.0,510.0 1345.0,510.0 1345.0,570.0 998.0,570.0" fill="#ecedea" /><path d="M1026.500 149V561M1346.500 149V561" stroke="#e6e5de" stroke-width="1"/><polyline points="1067.3,149.0 1067.3,185.6" fill="none" stroke="#c9aea6" stroke-width="1.1" stroke-dasharray="1.600 3.400"/><polyline points="1067.3,185.6 1108.0,183.3 1165.0,178.8 1160.0,179.3 1370.0,175.3 1386.0,173.6 1386.0,149.0" fill="none" stroke="#c9aea6" stroke-width="1.1" stroke-dasharray="1.600 3.400"/><polyline points="1067.3,185.6 1053.8,194.4 1010.0,197.0 955.0,200.0" fill="none" stroke="#c9aea6" stroke-width="1.1" stroke-dasharray="1.600 3.400"/><polyline points="1053.8,194.4 1045.8,205.6 1026.7,206.7" fill="none" stroke="#c9aea6" stroke-width="1.1" stroke-dasharray="1.600 3.400"/><polyline points="955.0,198.0 965.0,205.0 1003.0,209.5" fill="none" stroke="#c9aea6" stroke-width="1.1" stroke-dasharray="1.600 3.400"/><polyline points="997.7,238.0 997.7,252.0" fill="none" stroke="#c9aea6" stroke-width="1.1" stroke-dasharray="1.600 3.400"/><polyline points="997.7,269.0 999.5,292.0" fill="none" stroke="#c9aea6" stroke-width="1.1" stroke-dasharray="1.600 3.400"/><polyline points="955.0,269.8 997.7,269.8" fill="none" stroke="#c9aea6" stroke-width="1.1" stroke-dasharray="1.600 3.400"/><polyline points="1108.0,183.3 1112.0,172.0 1139.8,149.0" fill="none" stroke="#c9aea6" stroke-width="1.1" stroke-dasharray="5 4"/><polyline points="1370.6,174.6 1391.0,189.0 1410.0,190.5 1515.0,173.6 1572.0,161.3" fill="none" stroke="#c9aea6" stroke-width="1.1" stroke-dasharray="5 4"/><polyline points="1001.2,304.1 1002.8,325.6 1052.2,324.8" fill="none" stroke="#c9aea6" stroke-width="1.1" stroke-dasharray="1.600 3.400"/><polyline points="1041.8,322.0 1093.6,318.5 1126.3,315.3 1165.0,311.3 1186.0,308.5" fill="none" stroke="#c9aea6" stroke-width="1.1" stroke-dasharray="1.600 3.400"/><polyline points="1052.2,322.0 1053.0,342.4" fill="none" stroke="#c9aea6" stroke-width="1.1" stroke-dasharray="1.600 3.400"/><polyline points="955.0,348.7 1053.0,342.4 1095.2,338.4 1138.2,335.2 1165.0,332.0 1215.5,325.0 1285.2,312.1 1316.6,304.6 1350.0,298.4 1439.0,277.5 1580.0,252.0" fill="none" stroke="#c9aea6" stroke-width="1.1" stroke-dasharray="1.600 3.400"/><polyline points="1094.4,318.5 1095.2,338.4" fill="none" stroke="#c9aea6" stroke-width="1.1" stroke-dasharray="1.600 3.400"/><polyline points="1123.9,293.8 1126.3,315.3" fill="none" stroke="#c9aea6" stroke-width="1.1" stroke-dasharray="1.600 3.400"/><polyline points="1137.4,313.7 1138.2,335.2" fill="none" stroke="#c9aea6" stroke-width="1.1" stroke-dasharray="1.600 3.400"/><polyline points="1053.0,342.4 995.6,418.8" fill="none" stroke="#c9aea6" stroke-width="1.1" stroke-dasharray="1.600 3.400"/><polyline points="1067.3,341.6 1095.2,365.5 1165.0,396.5 1206.0,427.4" fill="none" stroke="#c9aea6" stroke-width="1.1" stroke-dasharray="4 3"/><polyline points="963.8,349.5 963.8,421.0 965.4,449.7" fill="none" stroke="#c9aea6" stroke-width="1.1" stroke-dasharray="1.600 3.400"/><polyline points="963.8,418.0 995.6,418.8 1026.7,422.0 1090.0,424.4 1165.0,427.4 1206.2,427.4 1234.9,423.4 1300.0,405.0" fill="none" stroke="#c9aea6" stroke-width="1.1" stroke-dasharray="1.600 3.400"/><polyline points="1138.2,335.2 1165.0,349.5 1215.0,377.0 1240.0,404.0" fill="none" stroke="#c9aea6" stroke-width="1.1" stroke-dasharray="1.600 3.400"/><polyline points="1215.5,325.0 1221.0,356.5 1229.2,400.0 1238.0,437.0" fill="none" stroke="#c9aea6" stroke-width="1.1" stroke-dasharray="1.600 3.400"/><polyline points="1286.0,313.0 1288.0,327.0" fill="none" stroke="#c9aea6" stroke-width="1.1" stroke-dasharray="1.600 3.400"/><polyline points="995.6,421.8 994.0,437.0 989.3,484.7 981.3,561.0" fill="none" stroke="#c9aea6" stroke-width="1.1" stroke-dasharray="1.600 3.400"/><polyline points="1266.8,444.9 1266.8,466.4" fill="none" stroke="#c9aea6" stroke-width="1.1" stroke-dasharray="1.600 3.400"/><polyline points="1304.2,437.0 1304.2,468.8" fill="none" stroke="#c9aea6" stroke-width="1.1" stroke-dasharray="1.600 3.400"/><polyline points="1300.0,405.0 1313.0,428.0 1304.2,437.0" fill="none" stroke="#c9aea6" stroke-width="1.1" stroke-dasharray="1.600 3.400"/><polyline points="1460.6,444.9 1551.4,505.4" fill="none" stroke="#c9aea6" stroke-width="1.1" stroke-dasharray="1.600 3.400"/><polyline points="1509.2,440.9 1477.3,494.3" fill="none" stroke="#c9aea6" stroke-width="1.1" stroke-dasharray="1.600 3.400"/><polyline points="1451.0,489.5 1473.3,455.3" fill="none" stroke="#c9aea6" stroke-width="1.1" stroke-dasharray="1.600 3.400"/><polyline points="1451.0,489.5 1490.9,472.0" fill="none" stroke="#c9aea6" stroke-width="1.1" stroke-dasharray="1.600 3.400"/><polyline points="1451.0,491.1 1549.8,503.9" fill="none" stroke="#c9aea6" stroke-width="1.1" stroke-dasharray="1.600 3.400"/><polyline points="1549.8,466.4 1552.0,505.0 1558.6,550.0" fill="none" stroke="#c9aea6" stroke-width="1.1" stroke-dasharray="1.600 3.400"/><polyline points="1554.6,522.2 1572.0,520.6" fill="none" stroke="#c9aea6" stroke-width="1.1" stroke-dasharray="1.600 3.400"/><polyline points="1314.5,258.0 1320.4,290.0 1336.5,406.5" fill="none" stroke="#bfc3e3" stroke-width="5.8" stroke-linejoin="round" stroke-linecap="butt"/><polyline points="1323.0,330.0 1340.0,327.2 1455.0,310.5 1572.0,293.5 1580.0,292.3" fill="none" stroke="#bfc3e3" stroke-width="5.8" stroke-linejoin="round" stroke-linecap="butt"/><polyline points="1325.0,331.5 1301.0,339.0 1311.0,404.5" fill="none" stroke="#bfc3e3" stroke-width="5.8" stroke-linejoin="round" stroke-linecap="butt"/><polyline points="1337.4,403.7 1311.0,404.3 1251.0,418.3 1247.0,398.3" fill="none" stroke="#bfc3e3" stroke-width="5.8" stroke-linejoin="round" stroke-linecap="round"/><polyline points="1456.0,311.0 1366.0,445.0 1353.0,457.0 1359.0,491.0 1370.0,508.0 1428.0,539.2" fill="none" stroke="#bfc3e3" stroke-width="5.8" stroke-linejoin="round" stroke-linecap="butt"/><polyline points="1463.4,309.5 1559.8,375.6 1580.0,387.0" fill="none" stroke="#bfc3e3" stroke-width="5.8" stroke-linejoin="round" stroke-linecap="butt"/><polyline points="1558.9,376.5 1517.0,435.7" fill="none" stroke="#bfc3e3" stroke-width="5.8" stroke-linejoin="round" stroke-linecap="butt"/><polyline points="1517.0,435.7 1478.4,410.5 1472.9,421.0 1443.0,464.8 1448.7,507.4 1428.0,539.2 1447.5,555.5 1545.0,560.0 1580.0,542.0" fill="none" stroke="#bfc3e3" stroke-width="5.8" stroke-linejoin="round" stroke-linecap="butt"/><polyline points="1519.5,435.0 1551.4,460.8" fill="none" stroke="#bfc3e3" stroke-width="5.8" stroke-linejoin="round" stroke-linecap="round"/><polyline points="955.0,457.3 966.0,457.3" fill="none" stroke="#bfc3e3" stroke-width="5.8" stroke-linejoin="round" stroke-linecap="butt"/><polyline points="966.0,457.3 966.5,555.0" fill="none" stroke="#bfc3e3" stroke-width="5.8" stroke-linejoin="round" stroke-linecap="round"/><polyline points="966.0,457.3 995.0,446.0" fill="none" stroke="#bfc3e3" stroke-width="5.8" stroke-linejoin="round" stroke-linecap="round"/><polyline points="1407.5,561.0 1407.5,556.0" fill="none" stroke="#bfc3e3" stroke-width="5.8" stroke-linejoin="round" stroke-linecap="round"/><polyline points="1305.0,146.0 1340.0,150.5 1366.0,151.5 1372.0,146.0" fill="none" stroke="#bfc3e3" stroke-width="5.8" stroke-linejoin="round" stroke-linecap="butt"/><polyline points="1314.5,258.0 1320.4,290.0 1336.5,406.5" fill="none" stroke="#eeefef" stroke-width="4.4" stroke-linejoin="round" stroke-linecap="butt"/><polyline points="1323.0,330.0 1340.0,327.2 1455.0,310.5 1572.0,293.5 1580.0,292.3" fill="none" stroke="#eeefef" stroke-width="4.4" stroke-linejoin="round" stroke-linecap="butt"/><polyline points="1325.0,331.5 1301.0,339.0 1311.0,404.5" fill="none" stroke="#eeefef" stroke-width="4.4" stroke-linejoin="round" stroke-linecap="butt"/><polyline points="1337.4,403.7 1311.0,404.3 1251.0,418.3 1247.0,398.3" fill="none" stroke="#eeefef" stroke-width="4.4" stroke-linejoin="round" stroke-linecap="round"/><polyline points="1456.0,311.0 1366.0,445.0 1353.0,457.0 1359.0,491.0 1370.0,508.0 1428.0,539.2" fill="none" stroke="#eeefef" stroke-width="4.4" stroke-linejoin="round" stroke-linecap="butt"/><polyline points="1463.4,309.5 1559.8,375.6 1580.0,387.0" fill="none" stroke="#eeefef" stroke-width="4.4" stroke-linejoin="round" stroke-linecap="butt"/><polyline points="1558.9,376.5 1517.0,435.7" fill="none" stroke="#eeefef" stroke-width="4.4" stroke-linejoin="round" stroke-linecap="butt"/><polyline points="1517.0,435.7 1478.4,410.5 1472.9,421.0 1443.0,464.8 1448.7,507.4 1428.0,539.2 1447.5,555.5 1545.0,560.0 1580.0,542.0" fill="none" stroke="#eeefef" stroke-width="4.4" stroke-linejoin="round" stroke-linecap="butt"/><polyline points="1519.5,435.0 1551.4,460.8" fill="none" stroke="#eeefef" stroke-width="4.4" stroke-linejoin="round" stroke-linecap="round"/><polyline points="955.0,457.3 966.0,457.3" fill="none" stroke="#eeefef" stroke-width="4.4" stroke-linejoin="round" stroke-linecap="butt"/><polyline points="966.0,457.3 966.5,555.0" fill="none" stroke="#eeefef" stroke-width="4.4" stroke-linejoin="round" stroke-linecap="round"/><polyline points="966.0,457.3 995.0,446.0" fill="none" stroke="#eeefef" stroke-width="4.4" stroke-linejoin="round" stroke-linecap="round"/><polyline points="1407.5,561.0 1407.5,556.0" fill="none" stroke="#eeefef" stroke-width="4.4" stroke-linejoin="round" stroke-linecap="round"/><polyline points="1305.0,146.0 1340.0,150.5 1366.0,151.5 1372.0,146.0" fill="none" stroke="#eeefef" stroke-width="4.4" stroke-linejoin="round" stroke-linecap="butt"/><polyline points="940.0,260.6 955.0,259.4 1110.0,247.1 1160.0,243.0 1260.0,230.3 1370.0,216.1 1420.0,208.0 1500.0,193.4 1572.0,180.2 1590.0,176.9" fill="none" stroke="#bfc3de" stroke-width="18.2" stroke-linejoin="round"/><polyline points="940.0,301.7 955.0,300.1 1110.0,284.2 1160.0,279.2 1260.0,263.7 1370.0,246.6 1420.0,237.9 1500.0,223.0 1572.0,209.3 1590.0,206.0" fill="none" stroke="#bfc3de" stroke-width="18.2" stroke-linejoin="round"/><polyline points="1090.3,145.0 1090.3,149.0 1086.6,246.0" fill="none" stroke="#bfc3de" stroke-width="11.4" stroke-linejoin="round"/><polyline points="940.0,260.6 955.0,259.4 1110.0,247.1 1160.0,243.0 1260.0,230.3 1370.0,216.1 1420.0,208.0 1500.0,193.4 1572.0,180.2 1590.0,176.9" fill="none" stroke="#fefefe" stroke-width="15.8" stroke-linejoin="round"/><polyline points="940.0,301.7 955.0,300.1 1110.0,284.2 1160.0,279.2 1260.0,263.7 1370.0,246.6 1420.0,237.9 1500.0,223.0 1572.0,209.3 1590.0,206.0" fill="none" stroke="#fefefe" stroke-width="15.8" stroke-linejoin="round"/><polyline points="1090.3,145.0 1090.3,149.0 1086.6,246.0" fill="none" stroke="#fefefe" stroke-width="9.2" stroke-linejoin="round"/><path d="M-8.500 0H8.500M-8.500 0L-4 -2.600V2.600Z" transform="translate(1185.0 240.0) rotate(-6.0)" stroke="#8285a6" stroke-width="1.300" fill="#8285a6"/><path d="M-8.500 0H8.500M-8.500 0L-4 -2.600V2.600Z" transform="translate(1345.0 219.5) rotate(-8.0)" stroke="#8285a6" stroke-width="1.300" fill="#8285a6"/><path d="M-8.500 0H8.500M-8.500 0L-4 -2.600V2.600Z" transform="translate(1502.6 193.0) rotate(-10.5)" stroke="#8285a6" stroke-width="1.300" fill="#8285a6"/><path d="M-8.500 0H8.500M8.500 0L4 -2.600V2.600Z" transform="translate(1109.0 285.2) rotate(-5.5)" stroke="#8285a6" stroke-width="1.300" fill="#8285a6"/><path d="M-8.500 0H8.500M8.500 0L4 -2.600V2.600Z" transform="translate(1268.0 264.5) rotate(-8.5)" stroke="#8285a6" stroke-width="1.300" fill="#8285a6"/><path d="M-8.500 0H8.500M8.500 0L4 -2.600V2.600Z" transform="translate(1426.0 237.0) rotate(-10.0)" stroke="#8285a6" stroke-width="1.300" fill="#8285a6"/><polygon points="1234.2,342.5 1287.0,330.7 1293.0,380.8 1241.5,391.7" fill="#c2c2ba" /><polygon points="1235.1,341.4 1287.9,329.6 1293.9,379.7 1242.4,390.6" fill="#c2c2ba" /><polygon points="1235.9,340.2 1288.7,328.4 1294.7,378.5 1243.2,389.4" fill="#c2c2ba" /><polygon points="1236.8,339.1 1289.6,327.3 1295.6,377.4 1244.1,388.3" fill="#e6e3d5" stroke="#dcd9c9" stroke-width="0.6"/><polygon points="1453.9,342.6 1479.4,336.2 1524.9,367.1 1506.7,392.6 1471.2,369.0 1446.6,406.3 1423.0,391.7" fill="#c2c2ba" /><polygon points="1454.8,341.5 1480.3,335.1 1525.8,366.0 1507.6,391.5 1472.1,367.9 1447.5,405.2 1423.9,390.6" fill="#c2c2ba" /><polygon points="1455.6,340.3 1481.1,333.9 1526.6,364.8 1508.4,390.3 1472.9,366.7 1448.3,404.0 1424.7,389.4" fill="#c2c2ba" /><polygon points="1456.5,339.2 1482.0,332.8 1527.5,363.7 1509.3,389.2 1473.8,365.6 1449.2,402.9 1425.6,388.3" fill="#e6e3d5" stroke="#dcd9c9" stroke-width="0.6"/><polygon points="1403.4,415.4 1428.4,429.4 1404.1,467.1 1438.9,492.1 1419.8,516.8 1372.0,458.7" fill="#c2c2ba" /><polygon points="1404.3,414.3 1429.3,428.3 1405.0,466.0 1439.8,491.0 1420.7,515.7 1372.9,457.6" fill="#c2c2ba" /><polygon points="1405.1,413.1 1430.1,427.1 1405.8,464.8 1440.6,489.8 1421.5,514.5 1373.7,456.4" fill="#c2c2ba" /><polygon points="1406.0,412.0 1431.0,426.0 1406.7,463.7 1441.5,488.7 1422.4,513.4 1374.6,455.3" fill="#e6e3d5" stroke="#dcd9c9" stroke-width="0.6"/><polygon points="1568.6,301.6 1546.8,340.7 1577.4,358.4 1577.4,301.4" fill="#c2c2ba" /><polygon points="1569.5,300.5 1547.7,339.6 1578.3,357.3 1578.3,300.3" fill="#c2c2ba" /><polygon points="1570.3,299.3 1548.5,338.4 1579.1,356.1 1579.1,299.1" fill="#c2c2ba" /><polygon points="1571.2,298.2 1549.4,337.3 1580.0,355.0 1580.0,298.0" fill="#e6e3d5" stroke="#dcd9c9" stroke-width="0.6"/><polygon points="1563.2,409.9 1545.0,439.1 1577.4,457.4 1577.4,409.4" fill="#c2c2ba" /><polygon points="1564.1,408.8 1545.9,438.0 1578.3,456.3 1578.3,408.3" fill="#c2c2ba" /><polygon points="1564.9,407.6 1546.7,436.8 1579.1,455.1 1579.1,407.1" fill="#c2c2ba" /><polygon points="1565.8,406.5 1547.6,435.7 1580.0,454.0 1580.0,406.0" fill="#e6e3d5" stroke="#dcd9c9" stroke-width="0.6"/><polygon points="1569.4,480.2 1560.8,494.5 1577.4,506.4 1577.4,479.4" fill="#c2c2ba" /><polygon points="1570.3,479.1 1561.7,493.4 1578.3,505.3 1578.3,478.3" fill="#c2c2ba" /><polygon points="1571.1,477.9 1562.5,492.2 1579.1,504.1 1579.1,477.1" fill="#c2c2ba" /><polygon points="1572.0,476.8 1563.4,491.1 1580.0,503.0 1580.0,476.0" fill="#e6e3d5" stroke="#dcd9c9" stroke-width="0.6"/><polygon points="1462.6,498.1 1474.5,498.4 1473.0,510.3 1460.5,510.8" fill="#c2c2ba" /><polygon points="1463.3,497.3 1475.2,497.6 1473.7,509.5 1461.2,510.0" fill="#c2c2ba" /><polygon points="1463.9,496.4 1475.8,496.7 1474.3,508.6 1461.8,509.1" fill="#c2c2ba" /><polygon points="1464.6,495.6 1476.5,495.9 1475.0,507.8 1462.5,508.3" fill="#e6e3d5" stroke="#dcd9c9" stroke-width="0.6"/><polygon points="1489.9,522.4 1529.7,524.8 1528.1,547.9 1487.5,546.3" fill="#c2c2ba" /><polygon points="1490.8,521.3 1530.6,523.7 1529.0,546.8 1488.4,545.2" fill="#c2c2ba" /><polygon points="1491.6,520.1 1531.4,522.5 1529.8,545.6 1489.2,544.0" fill="#c2c2ba" /><polygon points="1492.5,519.0 1532.3,521.4 1530.7,544.5 1490.1,542.9" fill="#e6e3d5" stroke="#dcd9c9" stroke-width="0.6"/><polygon points="1362.4,543.1 1385.5,543.9 1383.9,573.4 1362.4,573.4" fill="#c2c2ba" /><polygon points="1363.3,542.0 1386.4,542.8 1384.8,572.3 1363.3,572.3" fill="#c2c2ba" /><polygon points="1364.1,540.8 1387.2,541.6 1385.6,571.1 1364.1,571.1" fill="#c2c2ba" /><polygon points="1365.0,539.7 1388.1,540.5 1386.5,570.0 1365.0,570.0" fill="#e6e3d5" stroke="#dcd9c9" stroke-width="0.6"/><polygon points="1337.4,541.5 1367.4,543.1 1367.4,573.4 1335.1,573.4" fill="#c2c2ba" /><polygon points="1338.3,540.4 1368.3,542.0 1368.3,572.3 1336.0,572.3" fill="#c2c2ba" /><polygon points="1339.1,539.2 1369.1,540.8 1369.1,571.1 1336.8,571.1" fill="#c2c2ba" /><polygon points="1340.0,538.1 1370.0,539.7 1370.0,570.0 1337.7,570.0" fill="#e6e3d5" stroke="#dcd9c9" stroke-width="0.6"/><polygon points="1322.9,464.1 1332.5,463.3 1331.4,488.8 1321.3,492.8" fill="#c2c2ba" /><polygon points="1323.6,463.3 1333.2,462.5 1332.1,488.0 1322.0,492.0" fill="#c2c2ba" /><polygon points="1324.2,462.4 1333.8,461.6 1332.7,487.1 1322.6,491.1" fill="#c2c2ba" /><polygon points="1324.9,461.6 1334.5,460.8 1333.4,486.3 1323.3,490.3" fill="#e6e3d5" stroke="#dcd9c9" stroke-width="0.6"/><polygon points="997.5,486.2 1106.2,496.1 1101.4,563.0 991.4,554.3" fill="#c2c2ba" /><polygon points="998.4,485.1 1107.1,495.0 1102.3,561.9 992.3,553.2" fill="#c2c2ba" /><polygon points="999.2,483.9 1107.9,493.8 1103.1,560.7 993.1,552.0" fill="#c2c2ba" /><polygon points="1000.1,482.8 1108.8,492.7 1104.0,559.6 994.0,550.9" fill="#e6e3d5" stroke="#dcd9c9" stroke-width="0.6"/><polygon points="1106.2,496.1 1203.6,504.1 1199.6,548.7 1199.1,573.4 1100.4,573.4" fill="#c2c2ba" /><polygon points="1107.1,495.0 1204.5,503.0 1200.5,547.6 1200.0,572.3 1101.3,572.3" fill="#c2c2ba" /><polygon points="1107.9,493.8 1205.3,501.8 1201.3,546.4 1200.8,571.1 1102.1,571.1" fill="#c2c2ba" /><polygon points="1108.8,492.7 1206.2,500.7 1202.2,545.3 1201.7,570.0 1103.0,570.0" fill="#e6e3d5" stroke="#dcd9c9" stroke-width="0.6"/><polygon points="1246.6,478.6 1311.6,481.8 1310.4,505.7 1300.8,506.4 1299.2,528.0 1292.8,528.8 1291.2,548.7 1284.9,549.4 1284.1,573.4 1199.1,573.4 1200.4,548.4 1204.4,547.9 1206.0,528.0 1212.4,528.0 1214.0,497.7 1222.4,497.7 1223.5,485.7 1245.0,486.5" fill="#c2c2ba" /><polygon points="1247.5,477.5 1312.5,480.7 1311.3,504.6 1301.7,505.3 1300.1,526.9 1293.7,527.7 1292.1,547.6 1285.8,548.3 1285.0,572.3 1200.0,572.3 1201.3,547.3 1205.3,546.8 1206.9,526.9 1213.3,526.9 1214.9,496.6 1223.3,496.6 1224.4,484.6 1245.9,485.4" fill="#c2c2ba" /><polygon points="1248.3,476.3 1313.3,479.5 1312.1,503.4 1302.5,504.1 1300.9,525.7 1294.5,526.5 1292.9,546.4 1286.6,547.1 1285.8,571.1 1200.8,571.1 1202.1,546.1 1206.1,545.6 1207.7,525.7 1214.1,525.7 1215.7,495.4 1224.1,495.4 1225.2,483.4 1246.7,484.2" fill="#c2c2ba" /><polygon points="1249.2,475.2 1314.2,478.4 1313.0,502.3 1303.4,503.0 1301.8,524.6 1295.4,525.4 1293.8,545.3 1287.5,546.0 1286.7,570.0 1201.7,570.0 1203.0,545.0 1207.0,544.5 1208.6,524.6 1215.0,524.6 1216.6,494.3 1225.0,494.3 1226.1,482.3 1247.6,483.1" fill="#e6e3d5" stroke="#dcd9c9" stroke-width="0.6"/><path d="M1313 502.300L1312.500 506L1303 506.600L1303.400 503ZM1301.800 524.600L1301.300 528.300L1295 529L1295.400 525.400ZM1293.800 545.300L1293.300 549L1287.300 549.600L1287.500 546Z" fill="#c2c2ba"/><text x="970.0" y="263.7" font-family="'DejaVu Sans Condensed', sans-serif" font-size="14.6" fill="#3a3a3a" text-anchor="start" stroke="#fff" stroke-width="2.600" stroke-linejoin="round" paint-order="stroke"  textLength="126.0" lengthAdjust="spacingAndGlyphs" transform="rotate(-4.85 970.0 263.7)">улица Притыцкого</text><text x="919.3" y="308.6" font-family="'DejaVu Sans Condensed', sans-serif" font-size="14.6" fill="#3a3a3a" text-anchor="start" stroke="#fff" stroke-width="2.600" stroke-linejoin="round" paint-order="stroke"  textLength="126.0" lengthAdjust="spacingAndGlyphs" transform="rotate(-5.60 919.3 308.6)">улица Притыцкого</text><text x="1559.3" y="215.5" font-family="'DejaVu Sans Condensed', sans-serif" font-size="14.6" fill="#3a3a3a" text-anchor="start" stroke="#fff" stroke-width="2.600" stroke-linejoin="round" paint-order="stroke"  textLength="126.0" lengthAdjust="spacingAndGlyphs" transform="rotate(-10.60 1559.3 215.5)">улица Притыцкого</text><text x="1094.3" y="172.6" font-family="'DejaVu Sans Condensed', sans-serif" font-size="12.3" fill="#3a3a3a" text-anchor="start" stroke="#fff" stroke-width="2.600" stroke-linejoin="round" paint-order="stroke"  textLength="23.0" lengthAdjust="spacingAndGlyphs" transform="rotate(-90.00 1094.3 172.6)">Дом</text><text x="1020.6" y="235.6" font-family="'DejaVu Sans', sans-serif" font-size="10.8" font-style="italic" fill="#161616" text-anchor="middle" stroke="#fff" stroke-width="2.600" stroke-linejoin="round" paint-order="stroke"  textLength="70.0" lengthAdjust="spacingAndGlyphs">Кунцевщина</text><text x="1290.0" y="396.5" font-family="'DejaVu Sans', sans-serif" font-size="12.3" font-style="italic" fill="#161616" text-anchor="middle" stroke="#fff" stroke-width="2.600" stroke-linejoin="round" paint-order="stroke"  textLength="43.3" lengthAdjust="spacingAndGlyphs">Gurtam</text><text x="1466.1" y="361.4" font-family="'DejaVu Sans', sans-serif" font-size="12.3" font-style="italic" fill="#161616" text-anchor="middle" stroke="#fff" stroke-width="2.600" stroke-linejoin="round" paint-order="stroke"  textLength="55.6" lengthAdjust="spacingAndGlyphs">РРБ-Банк</text><text x="1406.0" y="439.0" font-family="'DejaVu Sans', sans-serif" font-size="12.3" font-style="italic" fill="#161616" text-anchor="middle" stroke="#fff" stroke-width="2.600" stroke-linejoin="round" paint-order="stroke"  textLength="81.0" lengthAdjust="spacingAndGlyphs">Абсолютбанк</text><text x="1380.8" y="501.3" font-family="'DejaVu Sans', sans-serif" font-size="12.3" font-style="italic" fill="#161616" text-anchor="middle" stroke="#fff" stroke-width="2.600" stroke-linejoin="round" paint-order="stroke"  textLength="52.0" lengthAdjust="spacingAndGlyphs">Планета</text><text x="1380.8" y="515.3" font-family="'DejaVu Sans', sans-serif" font-size="12.3" font-style="italic" fill="#161616" text-anchor="middle" stroke="#fff" stroke-width="2.600" stroke-linejoin="round" paint-order="stroke"  textLength="56.0" lengthAdjust="spacingAndGlyphs">здоровья</text><text x="1040.7" y="519.8" font-family="'DejaVu Sans', sans-serif" font-size="12.3" font-style="italic" fill="#161616" text-anchor="middle" stroke="#fff" stroke-width="2.600" stroke-linejoin="round" paint-order="stroke"  textLength="73.3" lengthAdjust="spacingAndGlyphs">Самбест №2</text><circle cx="1039.9" cy="497.8" r="9.600" fill="#fff" stroke="#f3a48c" stroke-width="1.300"/><path d="M1035.1 497.8h9.600M1039.9 493.0v9.600" stroke="#f1643c" stroke-width="2.500"/><circle cx="1016.3" cy="553.6" r="9.600" fill="#fff" stroke="#f3a48c" stroke-width="1.300"/><path d="M1011.5 553.6h9.600M1016.3 548.8v9.600" stroke="#f1643c" stroke-width="2.500"/><circle cx="1263.9" cy="551.3" r="9.600" fill="#fff" stroke="#f3a48c" stroke-width="1.300"/><path d="M1259.1 551.3h9.600M1263.9 546.5v9.600" stroke="#f1643c" stroke-width="2.500"/><circle cx="1381.3" cy="480.3" r="9.600" fill="#fff" stroke="#f3a48c" stroke-width="1.300"/><path d="M1376.5 480.3h9.600M1381.3 475.5v9.600" stroke="#f1643c" stroke-width="2.500"/><circle cx="1573.0" cy="310.0" r="9.600" fill="#fff" stroke="#f3a48c" stroke-width="1.300"/><path d="M1568.2 310.0h9.600M1573.0 305.2v9.600" stroke="#f1643c" stroke-width="2.500"/><circle cx="1466.9" cy="342.4" r="9.400" fill="#fff" stroke="#4a72c8" stroke-width="1.500"/><text x="1466.9" y="347.1" font-family="'Liberation Sans', sans-serif" font-size="13.500" font-weight="700" fill="#3a66c4" text-anchor="middle">$</text><circle cx="1406.5" cy="417.5" r="9.400" fill="#fff" stroke="#4a72c8" stroke-width="1.500"/><text x="1406.5" y="422.2" font-family="'Liberation Sans', sans-serif" font-size="13.500" font-weight="700" fill="#3a66c4" text-anchor="middle">$</text><text x="1020.200" y="223.900" font-family="'DejaVu Sans', sans-serif" font-size="13.600" font-weight="700" fill="#f26b3d" text-anchor="middle" textLength="10.400" lengthAdjust="spacingAndGlyphs">M</text><circle cx="1290" cy="370.100" r="14.100" fill="#fff" stroke="#b8d8f2" stroke-width="1.400"/><path d="M1283.400 367.600L1287.200 371.400L1283.400 375.200L1279.600 371.400Z" fill="#3a62c6"/><path d="M1288 363.700L1291.700 367.400L1288 371.100L1284.300 367.400Z" fill="#a9d4f6"/><rect x="-6.600" y="-2.700" width="13.200" height="5.400" rx="1.100" transform="translate(1294.300 370) rotate(-43)" fill="#f1643c"/><circle cx="1264.300" cy="354.100" r="89.200" fill="none" stroke="#48626f" stroke-width="3.900" stroke-linecap="round" stroke-dasharray="1.100 6.265"/><path d="M1263.700 356C1256 346.500 1249.200 338.500 1249.200 329.300C1249.200 321 1255.600 314.600 1263.700 314.600C1271.800 314.600 1278.200 321 1278.200 329.300C1278.200 338.500 1271.400 346.500 1263.700 356Z" fill="#546e7a" stroke="#fff" stroke-width="2"/></svg><div class="a" style="left:12px;top:12px;width:33px;height:67px;background:#fff;border-radius:2px;box-shadow:1px 1px 6px rgba(0,0,0,.42)"></div><div class="a" style="left:12px;top:12px;width:33px;height:33px;background:#f3f3f3;border-bottom:1px solid #d9d9d9;border-radius:2px 2px 0 0"></div><svg style="left:12px;top:12px" width="33" height="67" viewBox="0 0 33 67"><path d="M10.200 16.500H24M17.100 9.600V23.400" stroke="#bababa" stroke-width="2.300"/><path d="M10 50H24" stroke="#0a0a0a" stroke-width="2.600"/></svg><div class="a" style="left:560px;top:12px;width:45px;height:45px;background:#fff;border-radius:5px;box-shadow:0 1px 5px rgba(0,0,0,.4)"></div><svg style="left:565px;top:17px" width="35" height="35" viewBox="0 0 35 35"><path d="M17.500 15.300L33.800 23.500L17.500 32.500L1.200 23.500Z" fill="#c4c4c4" stroke="#a0a0a0" stroke-width=".7"/><path d="M17.500 9L33.800 17.200L17.500 26.200L1.200 17.200Z" fill="#d2d2d2" stroke="#8c8c8c" stroke-width=".7"/><path d="M17.500 2.500L33.800 10.700L17.500 19.700L1.200 10.700Z" fill="#e9e9e9" stroke="#7d7d7d" stroke-width=".7"/><path d="M17.500 7.500L28 12.700L17.500 18.400L7 12.700Z" fill="#dcdcdc"/></svg></div>
<div class="a" style="left:955px;top:578px;width:617px;height:200px;background:#fff;box-shadow:0 1px 6px rgba(0,0,0,.22)"></div><span class="t" style="top:609.00px;font-size:18.20px;color:#7a919d;letter-spacing:-0.857px;left:971.40px;-webkit-text-stroke:.55px #7a919d;">КЛИЕНТ</span><span class="t" style="top:695.00px;font-size:18.00px;color:#c2c2c2;letter-spacing:-0.190px;left:971.40px;">Имя клиента</span><div class="a" style="left:971px;top:722px;width:585px;height:1px;background:#dedede"></div>
<div class="a" style="left:1589px;top:133px;width:7px;height:607px;background:#fff"></div><div class="a" style="left:1589.500px;top:133px;width:6.500px;height:606px;background:#dcdcdc;border-radius:3px"></div><div class="a" style="left:1589.500px;top:133px;width:6.500px;height:413px;background:#a9a9a9;border-radius:3px"></div><div class="a" style="left:321px;top:740px;width:1275px;height:69px;background:#fff"></div><div class="a" style="left:1060px;top:751px;width:110px;height:45px;background:#fff;border-radius:3px;box-shadow:0 1px 5px rgba(0,0,0,.28)"></div><span class="t" style="top:766.00px;font-size:17.40px;color:#727272;letter-spacing:-0.581px;left:1078.50px;-webkit-text-stroke:.2px #727272;">ОТМЕНА</span><div class="a" style="left:1182px;top:751px;width:266px;height:45px;background:#89a1ac;border-radius:3px;box-shadow:0 1px 4px rgba(0,0,0,.25)"></div><span class="t" style="top:766.00px;font-size:17.20px;color:#fff;font-weight:700;letter-spacing:-0.299px;left:1192.00px;">СОХРАНИТЬ И ПРОДОЛЖИТЬ</span><div class="a" style="left:1461px;top:751px;width:122px;height:45px;background:#89a1ac;border-radius:3px;box-shadow:0 1px 4px rgba(0,0,0,.25)"></div><span class="t" style="top:766.00px;font-size:17.20px;color:#fff;font-weight:700;letter-spacing:-0.520px;left:1471.00px;">СОХРАНИТЬ</span></div></body></html>
